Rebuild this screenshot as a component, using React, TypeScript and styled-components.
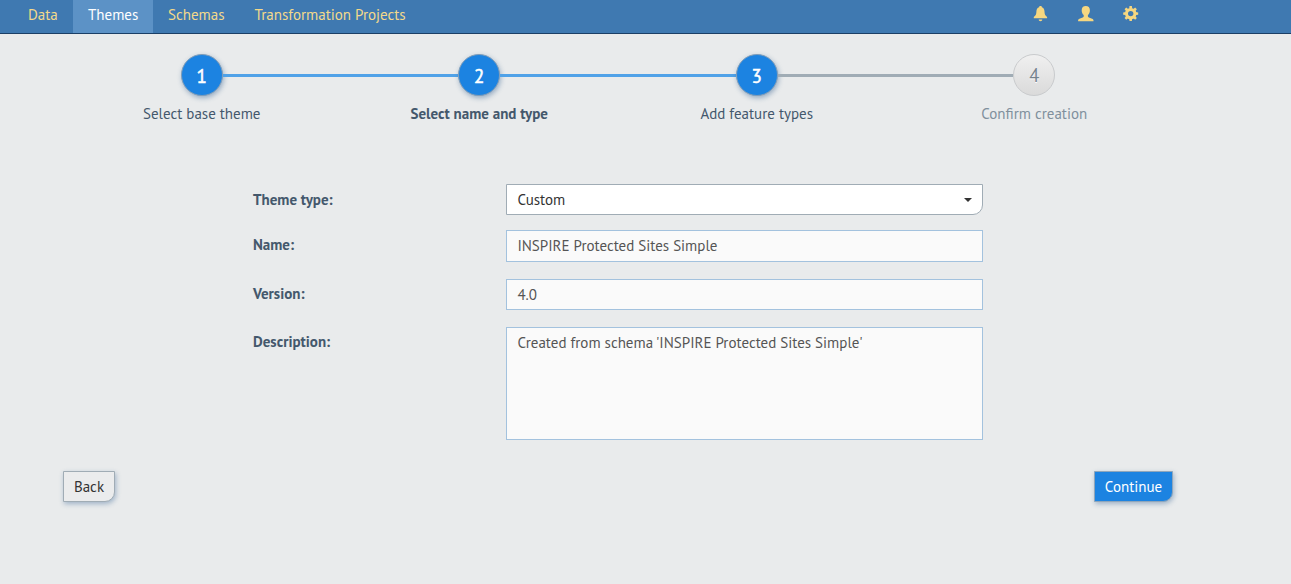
import React from 'react';
import styled, { createGlobalStyle, css } from 'styled-components';

const GlobalStyle = createGlobalStyle`
  *, *::before, *::after { box-sizing: border-box; }
  body {
    margin: 0;
    min-height: 584px;
    background: #e9ebec;
    color: #44586c;
    font-family: "PT Sans", "Open Sans", "Noto Sans", sans-serif;
    font-size: 15px;
    line-height: 20px;
    overflow: hidden;
  }
  input, textarea, button { font: inherit; }
`;

const NavBar = styled.nav`
  display: flex;
  height: 34px;
  padding-left: 13px;
  padding-right: 152px;
  background: #3f79b1;
  border-bottom: 1px solid #1b3f66;
`;

const NavItem = styled.a<{ $width: number; $active?: boolean }>`
  width: ${p => p.$width}px;
  padding: 5px 0 0 15px;
  white-space: nowrap;
  color: ${p => (p.$active ? '#ffffff' : '#f3d98b')};
  background: ${p => (p.$active ? '#5c92c6' : 'transparent')};
`;

const NavIcons = styled.div`
  display: flex;
  gap: 29px;
  margin-left: auto;
  padding-top: 6px;
  color: #f6d780;
  svg { display: block; width: 16px; height: 16px; fill: currentColor; }
`;

const Page = styled.main`
  width: 1110px;
  margin-left: 63px;
  padding-top: 20px;
`;

const Stepper = styled.ol`
  display: grid;
  grid-template-columns: repeat(4, 1fr);
  margin: 0;
  padding: 0;
  list-style: none;
`;

const Step = styled.li`
  display: flex;
  flex-direction: column;
`;

const Track = styled.div`
  display: flex;
  align-items: center;
`;

type Tone = 'none' | 'done' | 'pending';
const tones = { none: 'transparent', done: '#50a2e8', pending: '#a0acb5' };

const Line = styled.span<{ $tone: Tone }>`
  flex: 1;
  height: 3px;
  margin-top: 1px;
  background: ${p => tones[p.$tone]};
`;

const Circle = styled.span<{ $done: boolean }>`
  width: 42px;
  height: 42px;
  border-radius: 50%;
  text-align: center;
  font-size: 19px;
  line-height: 42px;
  ${p =>
    p.$done
      ? css`
          color: #fff;
          -webkit-text-stroke: 0.5px #fff;
          background: #1c83e1;
          border: 1px solid #7f9db9;
          box-shadow: 1px 2px 5px rgba(50, 95, 145, 0.45);
        `
      : css`
          color: #75828c;
          font-size: 18.5px;
          line-height: 41px;
          background: linear-gradient(#f0f0f0, #dadada);
          border: 1px solid #c9cbcd;
          text-shadow: 0 1px 0 #fff;
        `}
`;

const StepLabel = styled.span<{ $current?: boolean; $muted?: boolean }>`
  margin-top: 8px;
  text-align: center;
  white-space: nowrap;
  font-weight: ${p => (p.$current ? 700 : 400)};
  color: ${p => (p.$muted ? '#80909d' : '#44586c')};
`;

const Form = styled.form`
  display: grid;
  grid-template-columns: 253px 477px;
  grid-template-rows: 46px 49px 48px 113px;
  align-items: start;
  margin: 60px 0 0 190px;
`;

const Label = styled.label<{ $top?: number }>`
  padding-top: ${p => p.$top ?? 5}px;
  font-weight: 700;
`;

const Select = styled.div`
  display: flex;
  align-items: center;
  justify-content: space-between;
  height: 31px;
  padding: 0 10px 0 10.4px;
  color: #333;
  background: #fff;
  border: 1px solid #a0acb5;
  border-radius: 0 0 10px 0;
`;

const Caret = styled.span`
  border: 4px solid transparent;
  border-top-color: #333;
  border-bottom: 0;
`;

const field = css`
  width: 100%;
  color: #555;
  background: #fafafa;
  border: 1px solid #a3c2de;
  border-radius: 0;
  outline: 0;
`;

const Input = styled.input<{ $height: number }>`
  ${field}
  height: ${p => p.$height}px;
  padding: 0 10.4px 1px;
`;

const TextArea = styled.textarea`
  ${field}
  height: 113px;
  padding: 5px 10.4px;
  resize: none;
`;

const Actions = styled.div`
  display: flex;
  justify-content: space-between;
  margin-top: 31px;
`;

const Button = styled.button<{ $primary?: boolean }>`
  width: ${p => (p.$primary ? 79 : 52)}px;
  height: 31px;
  padding: 0;
  white-space: nowrap;
  color: ${p => (p.$primary ? '#fff' : '#333')};
  background: ${p => (p.$primary ? '#1c83e1' : '#ebeced')};
  border: 1px solid ${p => (p.$primary ? '#8fa6bb' : '#a0acb5')};
  border-radius: 0 0 10px 0;
  box-shadow: 1px 2px 5px rgba(50, 95, 145, 0.4);
`;

const steps: { text: string; left: Tone; right: Tone; done: boolean; current?: boolean }[] = [
  { text: 'Select base theme', left: 'none', right: 'done', done: true },
  { text: 'Select name and type', left: 'done', right: 'done', done: true, current: true },
  { text: 'Add feature types', left: 'done', right: 'pending', done: true },
  { text: 'Confirm creation', left: 'pending', right: 'none', done: false },
];

const BellIcon = () => (
  <svg viewBox="0 0 16 16">
    <path d="M7.500 0c.9 0 1.400.5 1.400 1.200 1.700.6 2.500 2.100 2.600 4.200.1 2.600.5 4 2.600 5.500v1.300H.8v-1.300c2.100-1.500 2.500-2.900 2.600-5.500.1-2.100.9-3.600 2.700-4.200C6.100.5 6.600 0 7.500 0zM5.700 13.500h3.600c0 1-.8 1.700-1.800 1.700s-1.800-.7-1.800-1.700z" />
  </svg>
);

const UserIcon = () => (
  <svg viewBox="0 0 16 16">
    <path d="M7.800 0c2.600 0 4.100 1.600 4.100 4.200 0 2-.7 3.800-2 4.900v1.200c0 .6.400.8 1 1.100l3.200 1.300c.9.400 1.400.9 1.400 1.700v.9H.1v-.9c0-.8.5-1.300 1.400-1.700l3.200-1.300c.6-.3 1-.5 1-1.100V9.100c-1.300-1.100-2-2.900-2-4.900C3.700 1.600 5.200 0 7.800 0z" />
  </svg>
);

const GearIcon = () => (
  <svg viewBox="0 0 16 16">
    <circle cx="7.700" cy="7.600" r="4.200" fill="none" stroke="currentColor" strokeWidth="3" />
    {[0, 45, 90, 135, 180, 225, 270, 315].map(a => (
      <path key={a} d="M6.200 2.800L6.500.1h2.400l.3 2.700z" transform={`rotate(${a} 7.700 7.600)`} />
    ))}
  </svg>
);

export default function App() {
  return (
    <>
      <GlobalStyle />
      <NavBar>
        <NavItem $width={60}>Data</NavItem>
        <NavItem $width={80} $active>Themes</NavItem>
        <NavItem $width={86.5}>Schemas</NavItem>
        <NavItem $width={181}>Transformation Projects</NavItem>
        <NavIcons>
          <BellIcon />
          <UserIcon />
          <GearIcon />
        </NavIcons>
      </NavBar>
      <Page>
        <Stepper>
          {steps.map((s, i) => (
            <Step key={s.text}>
              <Track>
                <Line $tone={s.left} />
                <Circle $done={s.done}>{i + 1}</Circle>
                <Line $tone={s.right} />
              </Track>
              <StepLabel $current={s.current} $muted={!s.done}>{s.text}</StepLabel>
            </Step>
          ))}
        </Stepper>
        <Form>
          <Label $top={6}>Theme type:</Label>
          <Select>Custom<Caret /></Select>
          <Label>Name:</Label>
          <Input $height={32} defaultValue="INSPIRE Protected Sites Simple" />
          <Label>Version:</Label>
          <Input $height={31} defaultValue="4.0" />
          <Label>Description:</Label>
          <TextArea defaultValue="Created from schema 'INSPIRE Protected Sites Simple'" />
        </Form>
        <Actions>
          <Button>Back</Button>
          <Button $primary>Continue</Button>
        </Actions>
      </Page>
    </>
  );
}
